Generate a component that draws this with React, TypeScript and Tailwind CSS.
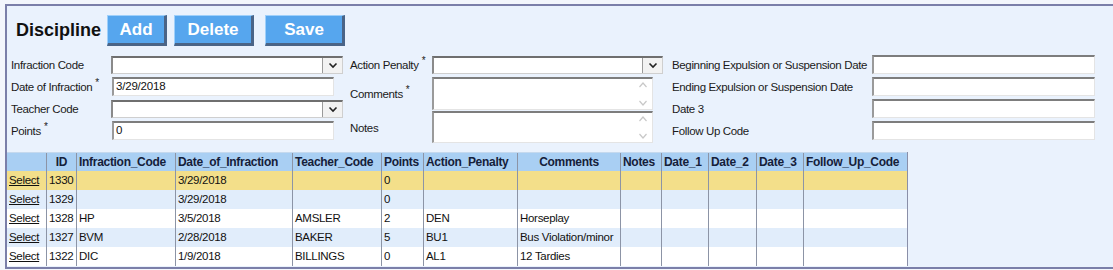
import React from "react";

const font = { fontFamily: '"Liberation Sans", Arial, sans-serif' };

function Label({ text, req, w }: { text: string; req?: boolean; w: string }) {
  return (
    <div className={`${w} mt-[3px] shrink-0 whitespace-nowrap text-[11.5px] leading-none tracking-[-0.35px] text-[#1a1a1a]`}>
      {text}
      {req && <sup className="ml-[3px] text-[10px]">*</sup>}
    </div>
  );
}

function TextBox({ value = "", w }: { value?: string; w: string }) {
  return (
    <div
      className={`${w} flex h-[19px] items-center border-t-2 border-l-2 border-t-[#7d7d7d] border-l-[#9a9a9a] border-b border-r border-b-[#e4e4e4] border-r-[#e4e4e4] bg-white pl-[2px] text-[11.5px] tracking-[-0.2px] text-[#111]`}
    >
      {value}
    </div>
  );
}

function Select({ w }: { w: string }) {
  return (
    <div
      className={`${w} flex h-[18px] items-stretch border-t-2 border-l-2 border-t-[#6f6f6f] border-l-[#8a8a8a] border-b border-r border-b-[#cfcfcf] border-r-[#cfcfcf] bg-white`}
    >
      <div className="flex-1" />
      <div className="flex w-[20px] items-center justify-center border-l border-[#9a9a9a] bg-[#f2f2f2]">
        <svg width="10" height="7" viewBox="0 0 10 7">
          <path d="M1.5 1.5 L5 5 L8.5 1.5" fill="none" stroke="#222" strokeWidth="1.6" />
        </svg>
      </div>
    </div>
  );
}

function TextArea({ w, h }: { w: string; h: string }) {
  return (
    <div
      className={`${w} ${h} flex border-t-2 border-l-2 border-t-[#7d7d7d] border-l-[#9a9a9a] border-b border-r border-b-[#e4e4e4] border-r-[#e4e4e4] bg-white`}
    >
      <div className="flex-1" />
      <div className="flex w-[18px] flex-col items-center justify-between py-[2px]">
        <svg width="10" height="8" viewBox="0 0 10 8">
          <path d="M1.5 6 L5 2 L8.5 6" fill="none" stroke="#c8c8c8" strokeWidth="1.2" />
        </svg>
        <svg width="10" height="8" viewBox="0 0 10 8">
          <path d="M1.5 2 L5 6 L8.5 2" fill="none" stroke="#c8c8c8" strokeWidth="1.2" />
        </svg>
      </div>
    </div>
  );
}

function Btn({ text, w }: { text: string; w: string }) {
  return (
    <button
      className={`${w} h-[31px] border-t border-l border-t-[#9fd0fb] border-l-[#9fd0fb] border-b-[3px] border-r-[3px] border-b-[#4a6487] border-r-[#4a6487] bg-[#56a6ee] text-[17px] font-bold text-white`}
    >
      {text}
    </button>
  );
}

const cols = [
  { h: "", w: "w-[39px]" },
  { h: "ID", w: "w-[30px]", center: true },
  { h: "Infraction_Code", w: "w-[99px]" },
  { h: "Date_of_Infraction", w: "w-[117px]" },
  { h: "Teacher_Code", w: "w-[89px]" },
  { h: "Points", w: "w-[42px]" },
  { h: "Action_Penalty", w: "w-[94px]" },
  { h: "Comments", w: "w-[103px]", center: true },
  { h: "Notes", w: "w-[41px]" },
  { h: "Date_1", w: "w-[47px]" },
  { h: "Date_2", w: "w-[48px]" },
  { h: "Date_3", w: "w-[47px]" },
  { h: "Follow_Up_Code", w: "w-[104px]" },
];

const rows = [
  ["1330", "", "3/29/2018", "", "0", "", ""],
  ["1329", "", "3/29/2018", "", "0", "", ""],
  ["1328", "HP", "3/5/2018", "AMSLER", "2", "DEN", "Horseplay"],
  ["1327", "BVM", "2/28/2018", "BAKER", "5", "BU1", "Bus Violation/minor"],
  ["1322", "DIC", "1/9/2018", "BILLINGS", "0", "AL1", "12 Tardies"],
];

const rowBg = ["bg-[#f3df8a]", "bg-[#e1edfb]", "bg-white", "bg-[#e1edfb]", "bg-white"];

export default function App() {
  return (
    <div className="h-[270px] w-[1113px] overflow-hidden bg-[#f3f6fc] pt-[4px] pl-[5px]" style={font}>
      <div className="h-[265px] border-t-2 border-l-2 border-b-2 border-[#7b7fa9] bg-[#eaf2fd] pl-[4px]">
        <div className="flex items-center pt-[9px]">
          <div className="ml-[5px] w-[91px] text-[18px] font-bold text-[#111]">Discipline</div>
          <Btn text="Add" w="w-[60px]" />
          <div className="ml-[7px]">
            <Btn text="Delete" w="w-[80px]" />
          </div>
          <div className="ml-[11px]">
            <Btn text="Save" w="w-[80px]" />
          </div>
        </div>

        <div className="mt-[9px] flex">
          <div className="flex w-[339px] flex-col gap-[3px]">
            <div className="flex h-[19px] items-center">
              <Label text="Infraction Code" w="w-[100px]" />
              <Select w="w-[232px]" />
            </div>
            <div className="flex h-[19px] items-center">
              <Label text="Date of Infraction" req w="w-[101px]" />
              <TextBox value="3/29/2018" w="w-[222px]" />
            </div>
            <div className="flex h-[19px] items-center">
              <Label text="Teacher Code" w="w-[100px]" />
              <Select w="w-[232px]" />
            </div>
            <div className="flex h-[19px] items-center">
              <Label text="Points" req w="w-[101px]" />
              <TextBox value="0" w="w-[222px]" />
            </div>
          </div>

          <div className="flex w-[322px] flex-col gap-[3px]">
            <div className="flex h-[19px] items-center">
              <Label text="Action Penalty" req w="w-[82px]" />
              <Select w="w-[231px]" />
            </div>
            <div className="flex items-center">
              <Label text="Comments" req w="w-[82px]" />
              <TextArea w="w-[221px]" h="h-[33px]" />
            </div>
            <div className="-mt-[2px] flex items-center">
              <Label text="Notes" w="w-[82px]" />
              <TextArea w="w-[221px]" h="h-[32px]" />
            </div>
          </div>

          <div className="flex flex-col gap-[3px]">
            <div className="flex h-[19px] items-center">
              <Label text="Beginning Expulsion or Suspension Date" w="w-[200px]" />
              <TextBox w="w-[223px]" />
            </div>
            <div className="flex h-[19px] items-center">
              <Label text="Ending Expulsion or Suspension Date" w="w-[200px]" />
              <TextBox w="w-[223px]" />
            </div>
            <div className="flex h-[19px] items-center">
              <Label text="Date 3" w="w-[200px]" />
              <TextBox w="w-[223px]" />
            </div>
            <div className="flex h-[19px] items-center">
              <Label text="Follow Up Code" w="w-[200px]" />
              <TextBox w="w-[223px]" />
            </div>
          </div>
        </div>

        <div className="-ml-[4px] mt-[9px] inline-block border-r border-[#8a8fa8]">
          <div className="flex h-[19px] border-t border-[#c5d9ee] bg-[#a9cff3]">
            {cols.map((c, i) => (
              <div
                key={i}
                className={`${c.w} flex items-center ${c.center ? "justify-center" : "justify-start"} ${
                  i > 0 ? "border-l border-[#8c94a6]" : ""
                } px-[2px] text-[12px] font-bold tracking-[-0.3px] whitespace-nowrap text-[#15203a]`}
              >
                {c.h}
              </div>
            ))}
          </div>
          {rows.map((r, ri) => (
            <div key={ri} className={`flex h-[19px] ${rowBg[ri]}`}>
              {cols.map((c, i) => {
                let content: React.ReactNode = "";
                if (i === 0) content = <span className="underline">Select</span>;
                else if (i <= 7) content = r[i - 1];
                return (
                  <div
                    key={i}
                    className={`${c.w} flex items-center ${i > 0 ? "border-l border-[#8c94a6]" : ""} px-[2px] text-[11.5px] tracking-[-0.3px] whitespace-nowrap text-[#111]`}
                  >
                    {content}
                  </div>
                );
              })}
            </div>
          ))}
        </div>
      </div>
    </div>
  );
}
